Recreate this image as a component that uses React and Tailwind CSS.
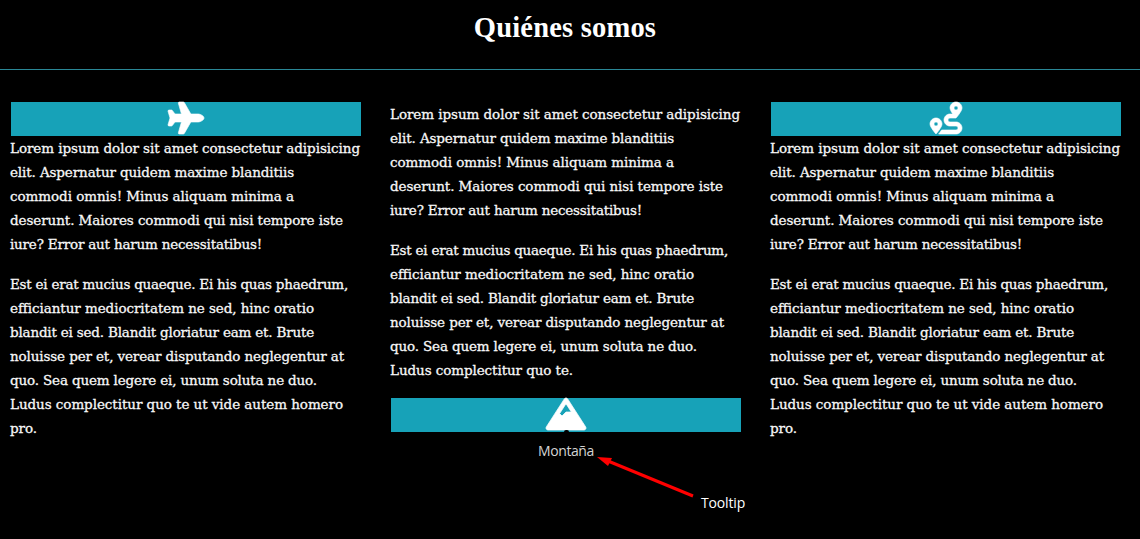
import React from 'react';
import { FaPlane, FaRoute, FaMountain } from 'react-icons/fa';

const intro = [
  'Lorem ipsum dolor sit amet consectetur adipisicing',
  'elit. Aspernatur quidem maxime blanditiis',
  'commodi omnis! Minus aliquam minima a',
  'deserunt. Maiores commodi qui nisi tempore iste',
  'iure? Error aut harum necessitatibus!',
];
const detail = [
  'Est ei erat mucius quaeque. Ei his quas phaedrum,',
  'efficiantur mediocritatem ne sed, hinc oratio',
  'blandit ei sed. Blandit gloriatur eam et. Brute',
  'noluisse per et, verear disputando neglegentur at',
  'quo. Sea quem legere ei, unum soluta ne duo.',
];
const introWidths = [350, 284, 284, 333, 252];
const detailWidths = [338, 304, 304, 334, 307];

function Paragraph({ lines, widths }) {
  const ref = React.useRef(null);
  React.useLayoutEffect(() => {
    for (const [i, el] of [...ref.current.children].entries()) {
      el.style.letterSpacing = '0px';
      const natural = el.getBoundingClientRect().width;
      el.style.letterSpacing = `${(widths[i] - natural) / lines[i].length}px`;
    }
  }, [lines, widths]);
  return (
    <p ref={ref} className="mb-4 -ml-px flex flex-col items-start text-[13.5px] leading-6 whitespace-nowrap font-['DejaVu_Serif',serif] text-[#f8f8f8] [-webkit-text-stroke:0.3px_#f8f8f8] [font-variant-ligatures:none]">
      {lines.map((line) => <span key={line}>{line}</span>)}
    </p>
  );
}

function Banner({ children }) {
  return <div className="flex h-[34px] w-[350px] items-start justify-center bg-[#17a2b8]">{children}</div>;
}

const longDetail = [...detail, 'Ludus complectitur quo te ut vide autem homero', 'pro.'];
const longWidths = [...detailWidths, 333, 27];
const shortDetail = [...detail, 'Ludus complectitur quo te.'];
const shortWidths = [...detailWidths, 183];

export default function App() {
  return (
    <div className="h-[539px] w-[1140px] overflow-hidden bg-black font-['Liberation_Serif',serif] text-white">
      <header className="flex h-[70px] justify-center border-b border-[#2a8796] pt-[11px] pr-[10px]">
        <h1 className="text-[28.5px] leading-[34px] font-bold tracking-[0.2px]">Quiénes somos</h1>
      </header>
      <main className="grid grid-cols-[350px_350px_350px] gap-[30px] pt-8 pl-[11px]">
        <section>
          <Banner><FaPlane className="mr-px h-8 w-9 overflow-visible [stroke-width:10px]" /></Banner>
          <Paragraph lines={intro} widths={introWidths} />
          <Paragraph lines={longDetail} widths={longWidths} />
        </section>
        <section>
          <Paragraph lines={intro} widths={introWidths} />
          <Paragraph lines={shortDetail} widths={shortWidths} />
          <div className="relative">
            <Banner><FaMountain className="mr-px h-8 w-10 overflow-visible [stroke-linejoin:round] [stroke-width:12px]" /></Banner>
            <div className="absolute top-8 left-[173px] h-[2px] w-[5px] rounded-t-full bg-black" />
            <div className="absolute top-[43px] left-[147px] font-['Open_Sans',sans-serif] text-[14px] leading-5 tracking-[-0.4px] text-[#d4d4d4]">Montaña</div>
            <svg className="absolute top-[53px] left-[200px]" width="110" height="50" fill="red">
              <path d="M17 10L102 45" stroke="red" strokeWidth="3" />
              <path d="M6 6L21 7L17 15Z" />
            </svg>
            <div className="absolute top-[95px] left-[310px] font-['Open_Sans',sans-serif] text-[14px] leading-5 font-medium tracking-[-0.15px]">Tooltip</div>
          </div>
        </section>
        <section>
          <Banner><FaRoute className="mr-px size-8 overflow-visible [stroke-width:10px]" /></Banner>
          <Paragraph lines={intro} widths={introWidths} />
          <Paragraph lines={longDetail} widths={longWidths} />
        </section>
      </main>
    </div>
  );
}
